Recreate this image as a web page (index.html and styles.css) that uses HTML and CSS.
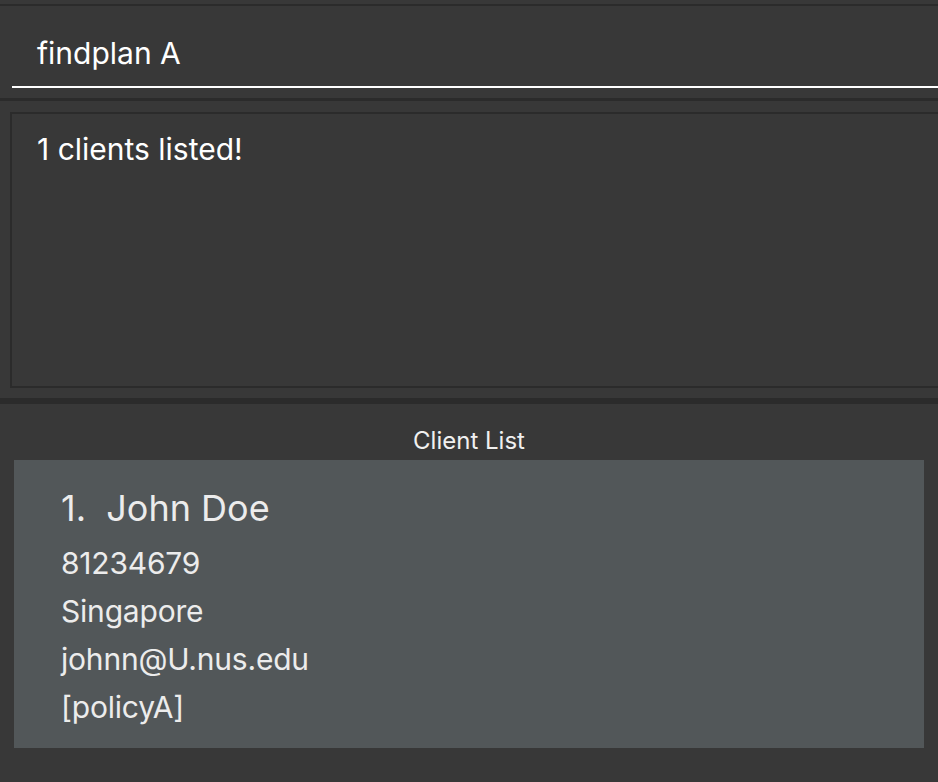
FILE: index.html
```html
<!DOCTYPE html>
<html>
<head>
<meta charset="utf-8">
<link rel="stylesheet" href="styles.css">
</head>
<body>
<div class="app">
  <section class="command-section">
    <div class="command-box">findplan A</div>
  </section>
  <section class="result-section">
    <div class="result-box">1 clients listed!</div>
  </section>
  <section class="list-section">
    <div class="list-title">Client List</div>
    <div class="card">
      <div class="card-name">1.&nbsp; John Doe</div>
      <div class="card-line card-phone">81234679</div>
      <div class="card-line">Singapore</div>
      <div class="card-line">johnn@U.nus.edu</div>
      <div class="card-line">[policyA]</div>
    </div>
  </section>
</div>
</body>
</html>
```

FILE: styles.css
```css
html, body {
  margin: 0;
  padding: 0;
  background: #383838;
  overflow: hidden;
}
body {
  font-family: Inter, "Noto Sans", sans-serif;
  width: 938px;
  height: 782px;
}
.app {
  padding-top: 4px;
  height: 778px;
  display: flex;
  flex-direction: column;
}
.command-section {
  border-top: 2px solid #2b2b2b;
  padding-bottom: 10px;
  border-bottom: 3px solid #2b2b2b;
}
.command-box {
  margin-left: 12px;
  padding: 29px 0 15px 25px;
  font-size: 30px;
  line-height: 36px;
  color: #ffffff;
  border-bottom: 2px solid #ffffff;
}
.result-section {
  padding: 11px 0 10px 10px;
  border-bottom: 6px solid #2b2b2b;
}
.result-box {
  margin-right: -10px;
  height: 255px;
  border: 2px solid #2b2b2b;
  padding: 17px 0 0 25px;
  font-size: 30px;
  line-height: 36px;
  color: #ffffff;
}
.list-section {
  flex: 1;
  padding: 22px 14px 0 14px;
}
.list-title {
  text-align: center;
  font-size: 24px;
  line-height: 30px;
  color: #f0f0f0;
  margin-bottom: 4px;
}
.card {
  background: #525759;
  padding: 22px 0 17px 47px;
  color: #ececec;
}
.card-name {
  font-size: 36px;
  line-height: 52px;
}
.card-line {
  font-size: 30px;
  line-height: 48px;
  letter-spacing: -0.2px;
}
.card-phone {
  margin-top: 5px;
}
```
